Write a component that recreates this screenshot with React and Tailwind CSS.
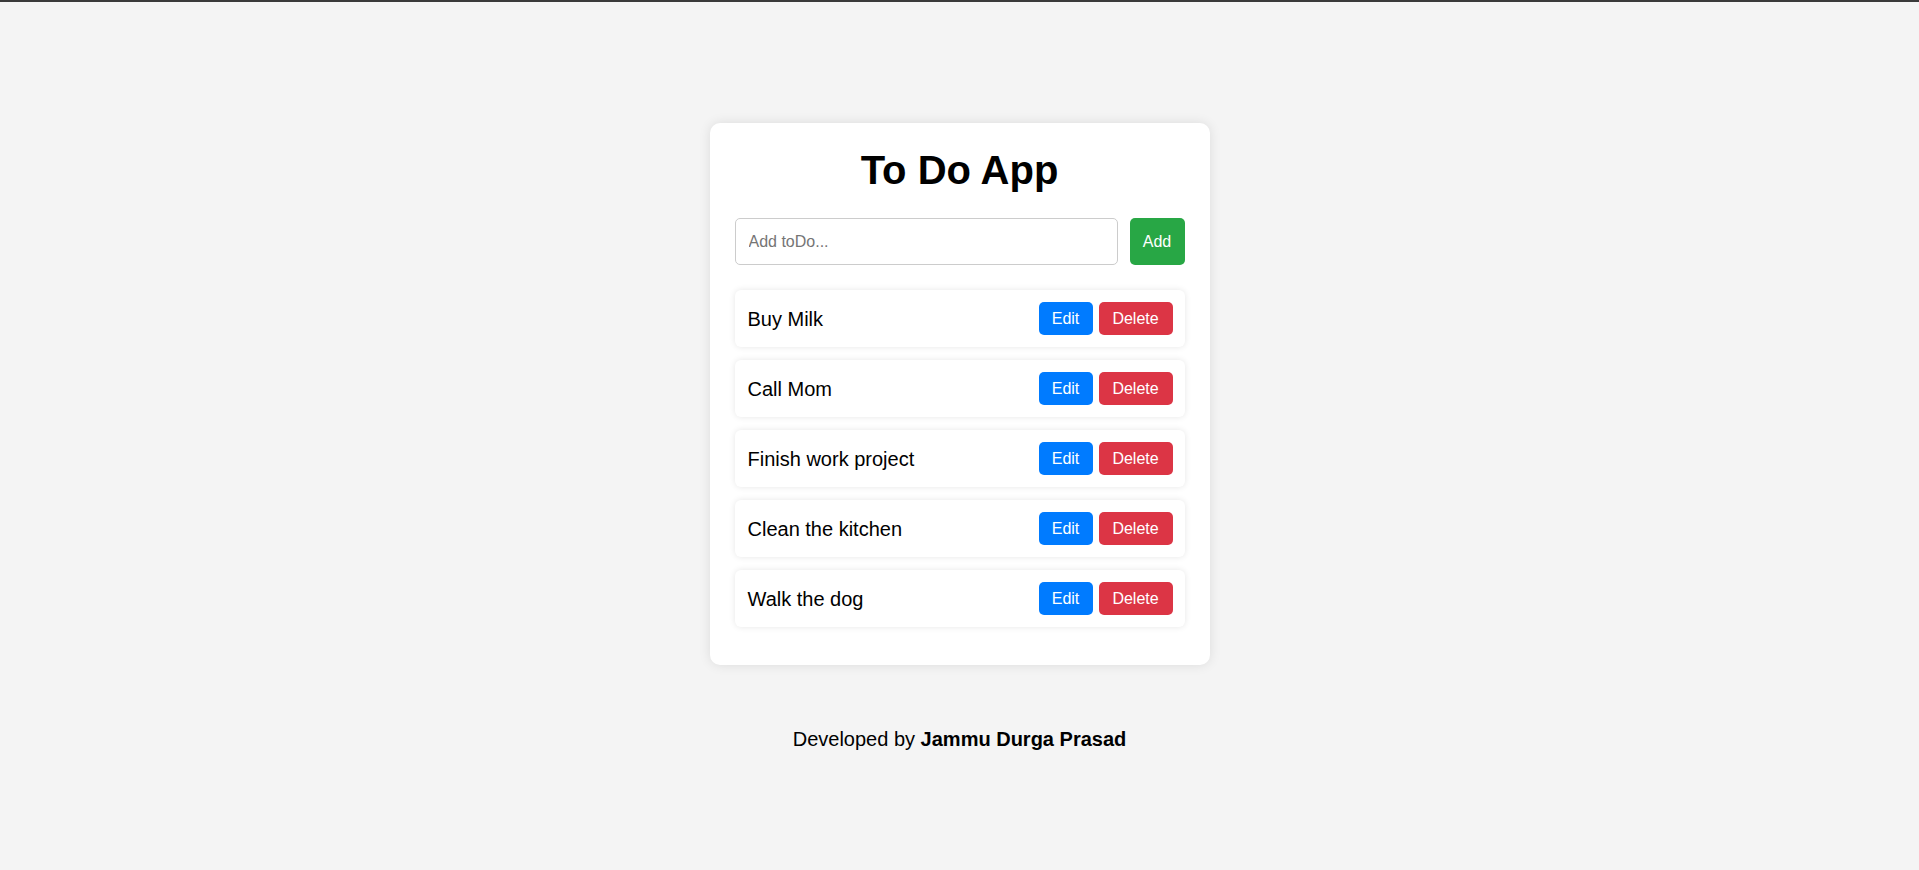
export default function App() {
  const todos = ["Buy Milk", "Call Mom", "Finish work project", "Clean the kitchen", "Walk the dog"];
  return (
    <div className="min-h-[870px] bg-[#f4f4f4] text-black" style={{ fontFamily: '"Liberation Sans", Arial, sans-serif' }}>
      <div className="h-[2px] bg-[#3a3a3a]" />
      <div className="flex flex-col items-center pt-[121px]">
        <div className="w-[500px] bg-white rounded-[10px] shadow-[0_0_12px_rgba(0,0,0,0.1)] px-[25px] pt-[25px] pb-[38px]">
          <h1 className="text-center font-bold text-[40px] leading-[45px]">To Do App</h1>
          <div className="flex gap-[12px] mt-[25px]">
            <input
              className="flex-1 h-[47px] border border-[#cccccc] rounded-[5px] px-[13px] text-[16px] placeholder:text-[#757575] outline-none"
              placeholder="Add toDo..."
            />
            <button className="h-[47px] w-[55px] rounded-[5px] bg-[#28a745] text-white text-[16px]">Add</button>
          </div>
          <div className="flex flex-col gap-[13px] mt-[25px]">
            {todos.map((t) => (
              <div key={t} className="flex items-center justify-between h-[57px] bg-white rounded-[6px] shadow-[0_0_6px_rgba(0,0,0,0.1)] pl-[13px] pr-[12px]">
                <span className="text-[20px]">{t}</span>
                <div className="flex gap-[6px]">
                  <button className="h-[33px] w-[54px] rounded-[5px] bg-[#007bff] text-white text-[16px]">Edit</button>
                  <button className="h-[33px] w-[74px] rounded-[5px] bg-[#dc3545] text-white text-[16px]">Delete</button>
                </div>
              </div>
            ))}
          </div>
        </div>
        <p className="mt-[63px] text-[20px] leading-[23px]">
          Developed by <b>Jammu Durga Prasad</b>
        </p>
      </div>
    </div>
  );
}
